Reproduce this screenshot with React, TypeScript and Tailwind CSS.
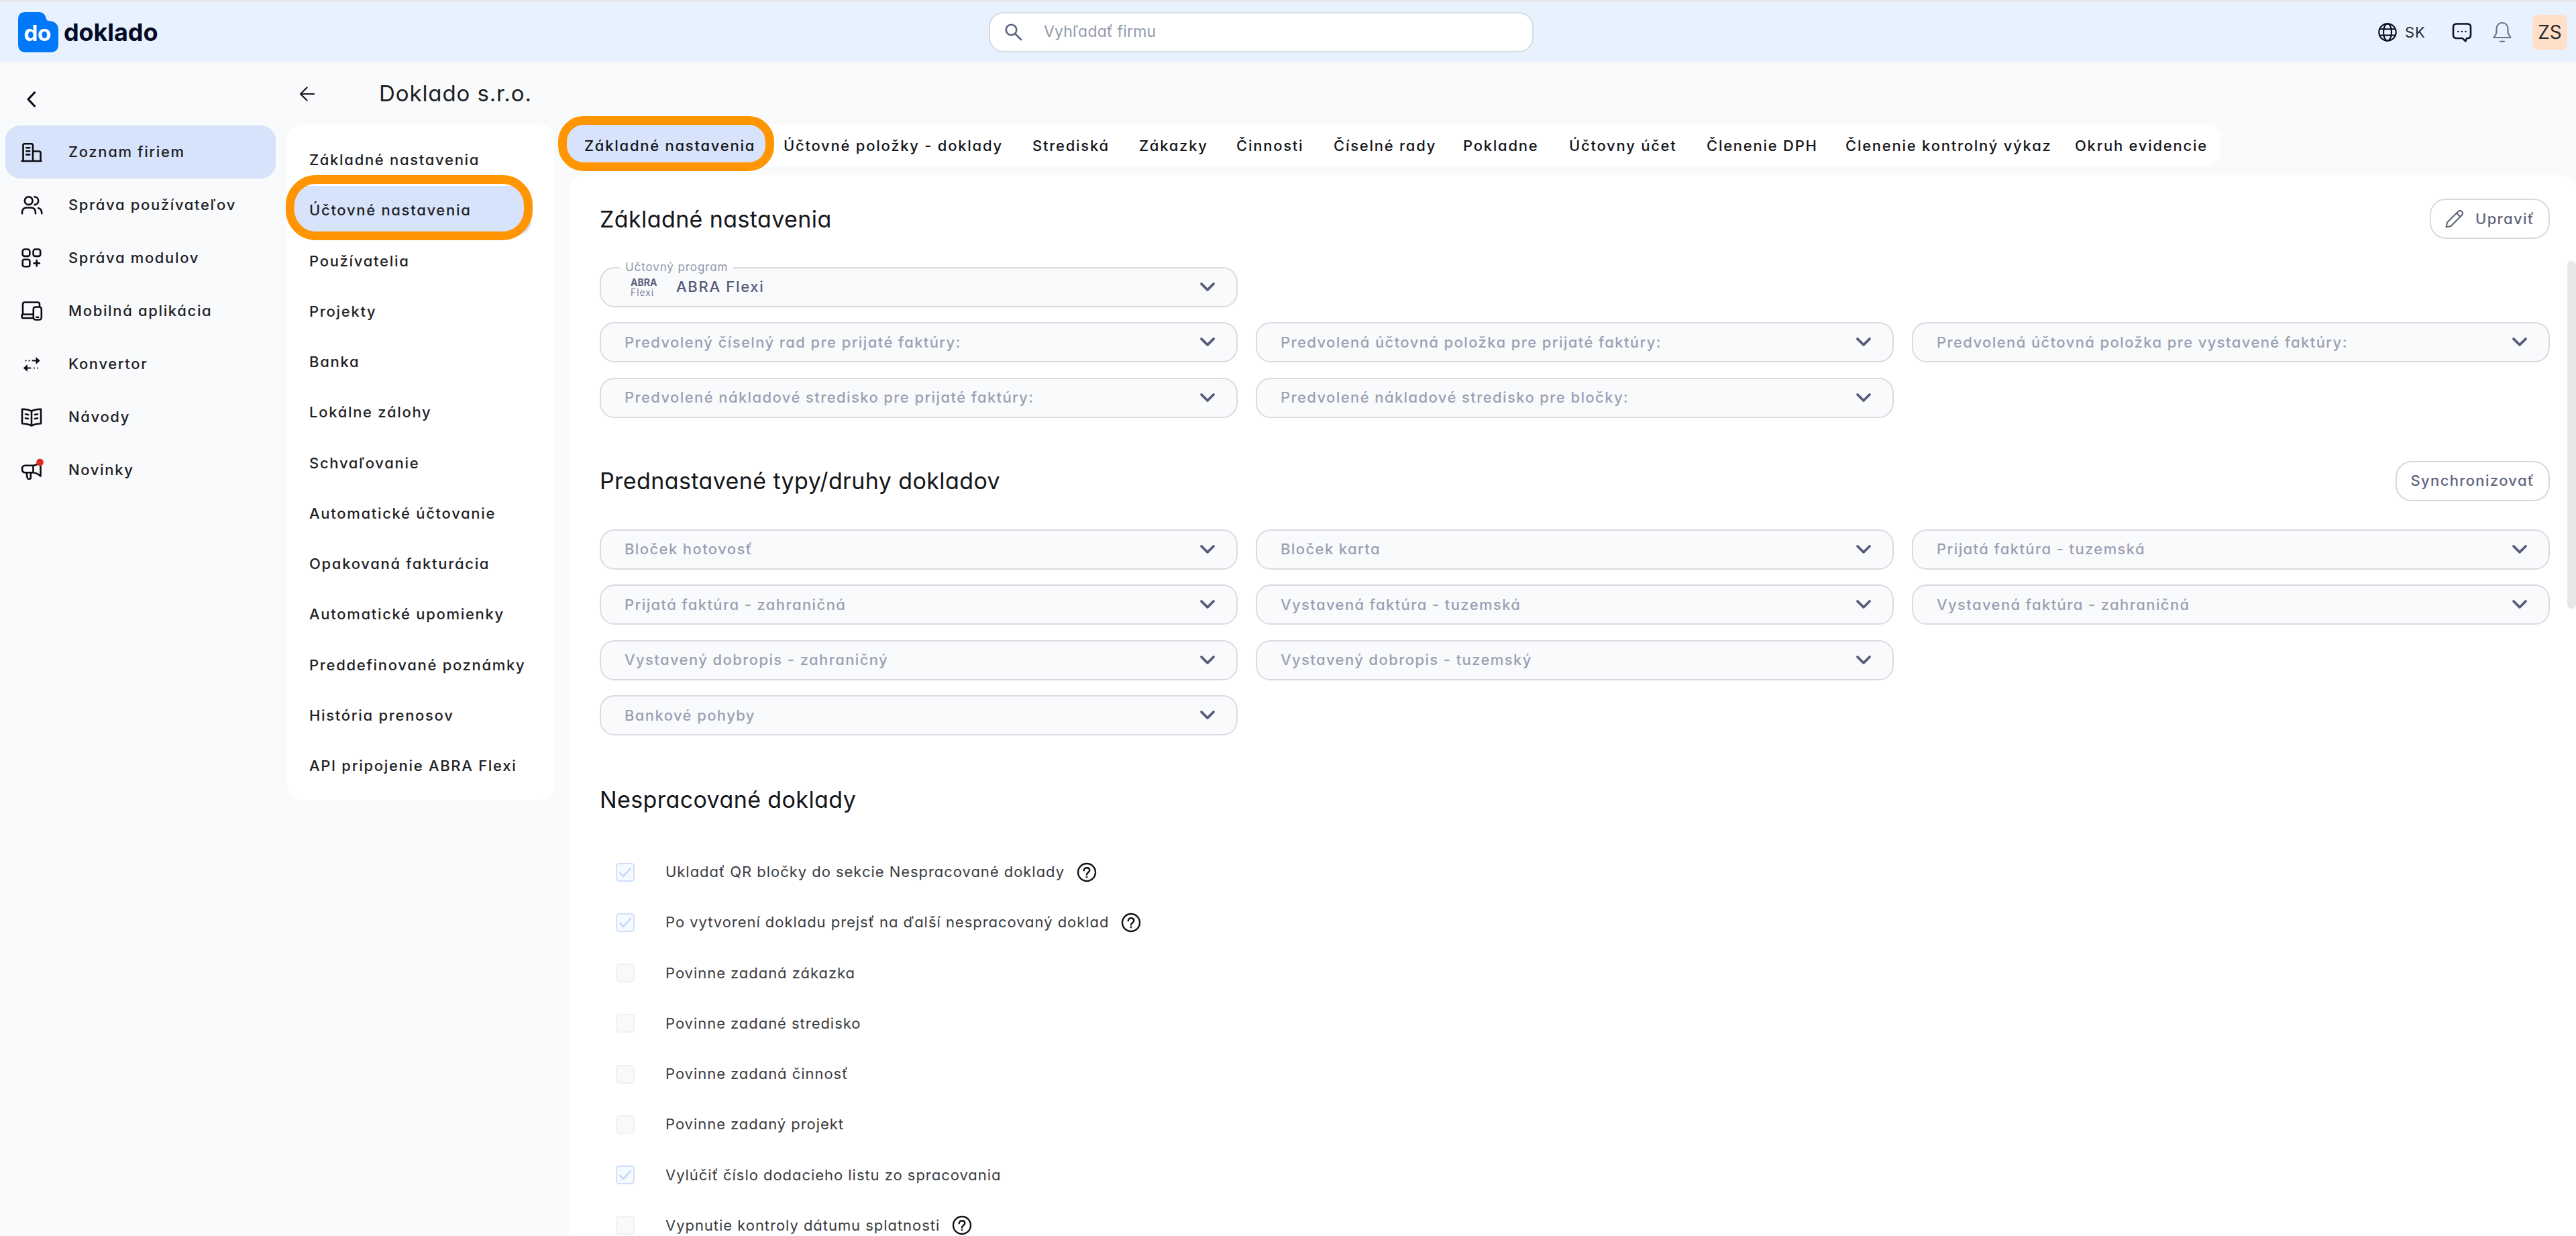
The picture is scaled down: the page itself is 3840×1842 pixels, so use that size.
import type { ReactNode } from 'react';
import clsx from 'clsx';

interface NavItem {
  label: string;
  icon: ReactNode;
}

interface CheckOption {
  label: string;
  checked?: boolean;
  help?: boolean;
}

function NavIcon({ children }: { children: ReactNode }) {
  return (
    <svg
      viewBox="0 0 32 32"
      className="size-8 shrink-0 overflow-visible"
      fill="none"
      stroke="#0b0b0f"
      strokeWidth="2.6"
      strokeLinecap="round"
      strokeLinejoin="round"
    >
      {children}
    </svg>
  );
}

const NAV: NavItem[] = [
  {
    label: 'Zoznam firiem',
    icon: (
      <NavIcon>
        <path d="M1.5 29h29M3.5 29V5.5Q3.5 3.2 5.8 3.2H15.7Q18 3.2 18 5.5V29M18 14.5H27Q29.5 14.5 29.5 17V29" />
        <path d="M8.3 9.3h4.900M8.3 14.3h4.900M8.3 19.4h4.900" />
      </NavIcon>
    ),
  },
  {
    label: 'Správa používateľov',
    icon: (
      <NavIcon>
        <circle cx="11.7" cy="9.2" r="5.9" />
        <path d="M20.5 3.3c3.5.2 5.700 2.600 5.700 5.900s-2.200 5.700-5.700 5.900" />
        <path d="M2 28.300v-1.500c0-4.500 2.500-7.300 6.500-7.300h7c4 0 6.500 2.800 6.500 7.300v1.500M26 20c3.200 1 5.200 3.500 5.200 7v1.300" />
      </NavIcon>
    ),
  },
  {
    label: 'Správa modulov',
    icon: (
      <NavIcon>
        <rect x="2.7" y="2.5" width="10.6" height="10.4" rx="3" />
        <rect x="18.6" y="2.5" width="10.6" height="10.4" rx="3" />
        <rect x="2.7" y="17.8" width="10.6" height="10.4" rx="2.5" />
        <path d="M23.7 19v8.400M19.5 23.200h8.400" />
      </NavIcon>
    ),
  },
  {
    label: 'Mobilná aplikácia',
    icon: (
      <NavIcon>
        <path d="M28 8V5.5Q28 2.5 25 2.5H6Q3 2.5 3 5.5V20.5M18 20.5H2.8Q1.6 20.5 1.6 21.8V23.4Q1.6 26 4.2 26H18" />
        <rect x="18.8" y="9.5" width="12" height="19" rx="3.2" />
        <path d="M23.5 24.800h2.600" />
      </NavIcon>
    ),
  },
  {
    label: 'Konvertor',
    icon: (
      <NavIcon>
        <path d="M7.5 10.500h.01M12.5 10.500h.01M17.5 10.500h7" strokeWidth="2.2" />
        <path d="M23 5.800l5.500 4.700-5.500 4.700z" fill="#0b0b0f" strokeWidth="0.5" />
        <path d="M25 21.500h-.01M20 21.500h-.01M14.5 21.500h-7" strokeWidth="2.2" />
        <path d="M9.500 16.800l-5.500 4.700 5.500 4.700z" fill="#0b0b0f" strokeWidth="0.5" />
      </NavIcon>
    ),
  },
  {
    label: 'Návody',
    icon: (
      <NavIcon>
        <path d="M16 6.5Q10 3.500 2 3.700V25.200Q10 25.200 16 28.500Q22 25.200 30 25.200V3.700Q22 3.500 16 6.500V28.500" />
        <path d="M7 11.200l4 .8M7 17.200l4 .8M25 11.200l-4 .8M25 17.200l-4 .8" />
      </NavIcon>
    ),
  },
  {
    label: 'Novinky',
    icon: (
      <NavIcon>
        <path d="M18.5 8.800H6.500C3.500 8.800 2 11 2 14s1.500 5.300 4.500 5.300H18.500zM18.5 8.800Q24.500 8 29.500 3.500V24.500Q24.500 20 18.500 19.300" />
        <path d="M8.5 19.500l1.300 7.700q.4 1.600 2 1.600h1q2 0 2-2V19.500" />
        <circle cx="28.5" cy="4" r="5.4" fill="#e02b20" stroke="none" />
      </NavIcon>
    ),
  },
];

const SETTINGS_MENU = [
  'Základné nastavenia',
  'Účtovné nastavenia',
  'Používatelia',
  'Projekty',
  'Banka',
  'Lokálne zálohy',
  'Schvaľovanie',
  'Automatické účtovanie',
  'Opakovaná fakturácia',
  'Automatické upomienky',
  'Preddefinované poznámky',
  'História prenosov',
  'API pripojenie ABRA Flexi',
];

const TABS = [
  { label: 'Základné nastavenia', width: 'w-[297px]' },
  { label: 'Účtovné položky - doklady', width: 'w-[371px]' },
  { label: 'Strediská', width: 'w-[159px]' },
  { label: 'Zákazky', width: 'w-[145px]' },
  { label: 'Činnosti', width: 'w-[145px]' },
  { label: 'Číselné rady', width: 'w-[193px]' },
  { label: 'Pokladne', width: 'w-[158px]' },
  { label: 'Účtovny účet', width: 'w-[205px]' },
  { label: 'Členenie DPH', width: 'w-[207px]' },
  { label: 'Členenie kontrolný výkaz', width: 'w-[342px]' },
  { label: 'Okruh evidencie', width: 'w-[215px]' },
];

const DEFAULT_FIELDS: (string | null)[] = [
  'Predvolený číselný rad pre prijaté faktúry:',
  'Predvolená účtovná položka pre prijaté faktúry:',
  'Predvolená účtovná položka pre vystavené faktúry:',
  'Predvolené nákladové stredisko pre prijaté faktúry:',
  'Predvolené nákladové stredisko pre bločky:',
];

// null keeps the grid cell empty
const DOCUMENT_TYPES: (string | null)[] = [
  'Bloček hotovosť',
  'Bloček karta',
  'Prijatá faktúra - tuzemská',
  'Prijatá faktúra - zahraničná',
  'Vystavená faktúra - tuzemská',
  'Vystavená faktúra - zahraničná',
  'Vystavený dobropis - zahraničný',
  'Vystavený dobropis - tuzemský',
  null,
  'Bankové pohyby',
];

const OPTIONS: CheckOption[] = [
  { label: 'Ukladať QR bločky do sekcie Nespracované doklady', checked: true, help: true },
  { label: 'Po vytvorení dokladu prejsť na ďalší nespracovaný doklad', checked: true, help: true },
  { label: 'Povinne zadaná zákazka' },
  { label: 'Povinne zadané stredisko' },
  { label: 'Povinne zadaná činnosť' },
  { label: 'Povinne zadaný projekt' },
  { label: 'Vylúčiť číslo dodacieho listu zo spracovania', checked: true },
  { label: 'Vypnutie kontroly dátumu splatnosti', help: true },
];

function Logo() {
  return (
    <div className="flex items-center">
      <svg viewBox="0 0 60 60" className="size-[60px]">
        <path
          d="M11 0H31Q38.5 0 41 7L42 10.500Q43 13 46 13Q60 14 60 27V48Q60 60 48 60H12Q0 60 0 48V11Q0 0 11 0Z"
          fill="#0078fa"
        />
        <text x="8.5" y="42.5" fill="#fff" fontSize="33" fontWeight="650" letterSpacing="-0.2">
          do
        </text>
      </svg>
      <span className="ml-[8px] text-[36px] leading-none font-[650] tracking-[-0.1px] text-[#050a24] [font-feature-settings:normal]">
        doklado
      </span>
    </div>
  );
}

function Header() {
  return (
    <header className="flex h-[92px] items-center border-t-[3px] border-[#e4e5ea] bg-[#e8f2fe]">
      <div className="w-[1474px] pl-[27px]">
        <Logo />
      </div>
      <div className="flex h-[60px] w-[812px] items-center rounded-[22px] border-2 border-[#d3dae4] bg-white pl-[22px]">
        <svg viewBox="0 0 26 26" className="size-[26px]" fill="none" stroke="#5d6580" strokeWidth="2.6" strokeLinecap="round">
          <circle cx="9.5" cy="9.5" r="7.8" />
          <path d="M15.5 15.500l8.500 8.500" />
        </svg>
        <span className="ml-[32px] text-[23px] tracking-[0.2px] text-[#929aad]">Vyhľadať firmu</span>
      </div>
      <div className="ml-auto flex items-center pr-[13px]">
        <svg viewBox="0 0 28 28" className="size-7" fill="none" stroke="#10131f" strokeWidth="2.2">
          <circle cx="14" cy="14" r="12.7" />
          <ellipse cx="14" cy="14" rx="6" ry="12.7" />
          <path d="M2.3 9.300h23.400M2.3 18.700h23.400" />
        </svg>
        <span className="ml-3 w-[37px] pt-[2px] text-[22px] tracking-[0.8px] text-[#26282f]">SK</span>
        <svg viewBox="0 0 30 30" className="ml-[33px] size-[30px]" fill="none" stroke="#10131f" strokeWidth="2.6" strokeLinejoin="round">
          <path d="M7 2.500H23Q28 2.500 28 7.500V19Q28 24 23.500 24H22L20.500 28.500L15.500 24H7Q2 24 2 19V7.500Q2 2.500 7 2.500Z" />
          <path d="M9.5 14h.01M15 14h.01M20.5 14h.01" strokeLinecap="round" />
        </svg>
        <svg viewBox="0 0 28 32" className="ml-[31px] h-8 w-7 overflow-visible" fill="none" stroke="#6d7384" strokeWidth="2.2" strokeLinecap="round" strokeLinejoin="round">
          <path d="M14 2C8.500 2 5.500 6 5.500 11V15.500Q5.500 17.500 4 20L1.500 24H26.500L24 20Q22.500 17.500 22.500 15.500V11C22.500 6 19.500 2 14 2Z" />
          <path d="M11 29.800h6" />
        </svg>
        <div className="ml-[31px] flex size-[52px] items-center justify-center rounded-lg bg-[#ffdfca] text-[28px] text-[#2b2a2c]">
          ZS
        </div>
      </div>
    </header>
  );
}

function Sidebar() {
  return (
    <aside className="w-[428px] shrink-0 px-2">
      <div className="flex h-[95px] items-center pt-[16px] pl-[29px]">
        <svg viewBox="0 0 20 24" className="h-6 w-5" fill="none" stroke="#0b0b0f" strokeWidth="3.2" strokeLinecap="round" strokeLinejoin="round">
          <path d="M14.5 2L5 12l9.500 10" />
        </svg>
      </div>
      <nav className="w-[403px]">
        {NAV.map((item, i) => (
          <a
            key={item.label}
            className={clsx('flex h-[79px] items-center gap-[39px] rounded-[22px] pl-[23px]', i === 0 && 'bg-[#d6e3fa]')}
          >
            {item.icon}
            <span className="text-[22px] font-[460] tracking-[1.65px] text-[#1f2125]">{item.label}</span>
          </a>
        ))}
      </nav>
    </aside>
  );
}

function SettingsMenu() {
  return (
    <nav className="h-[1008px] w-[398px] shrink-0 rounded-[22px] bg-white pt-[16px]">
      {SETTINGS_MENU.map((label, i) => (
        <a key={label} className="relative flex h-[75.25px] items-center px-3">
          <span
            className={clsx(
              'flex h-[73px] w-[352px] items-center rounded-[20px] pl-[21px] text-[22px] font-[460] tracking-[1.7px] text-[#1f2125]',
              i === 1 && 'bg-[#d6e3fa]',
            )}
          >
            {label}
          </span>
          {i === 1 && (
            <span className="absolute top-[-15px] left-[-2px] h-[97px] w-[368px] rounded-[45px] border-[13px] border-[#ff9500]" />
          )}
        </a>
      ))}
    </nav>
  );
}

function Tabs() {
  return (
    <div className="relative z-10 flex h-[63px] w-[2465px] items-center rounded-[22px] bg-white">
      <span className="absolute left-0 h-[61px] w-[300px] rounded-[22px] bg-[#d6e3fa]" />
      <div className="relative flex pt-[2px] pl-[26px] text-[22px] font-[460] tracking-[1.75px] whitespace-nowrap text-[#15161a]">
        {TABS.map((tab) => (
          <a key={tab.label} className={clsx('shrink-0', tab.width)}>
            {tab.label}
          </a>
        ))}
      </div>
      <span className="absolute top-[-12px] left-[-13px] h-[82px] w-[322px] rounded-[38px] border-[13px] border-[#ff9500]" />
    </div>
  );
}

function Chevron() {
  return (
    <svg viewBox="0 0 24 16" className="ml-auto h-4 w-6" fill="none" stroke="#565b7a" strokeWidth="3.8" strokeLinecap="round" strokeLinejoin="round">
      <path d="M3 3l9 9 9-9" />
    </svg>
  );
}

function Select({ label }: { label: string }) {
  return (
    <div className="flex h-[60px] items-center rounded-[22px] border-2 border-[#d9dbe1] bg-[#f8fafc] pr-[31px] pl-[35px]">
      <span className="text-[22px] font-medium tracking-[1.4px] whitespace-nowrap text-[#9b9fb3]">{label}</span>
      <Chevron />
    </div>
  );
}

function ProgramSelect() {
  return (
    <div className="relative flex h-[60px] items-center rounded-[22px] border-2 border-[#d9dbe1] bg-[#f8fafc] pr-[31px] pl-[44px]">
      <span className="absolute top-[-11px] left-[28px] flex h-5 items-center bg-linear-to-b from-white from-50% to-[#f8fafc] to-50% px-2 text-[17px] tracking-[0.9px] text-[#9296ac]">
        Učtovný program
      </span>
      <span className="flex w-[68px] flex-col text-[14px] leading-[15px] text-[#5c607c]">
        <b>ABRA</b>
        <span className="font-light tracking-[1px]">Flexi</span>
      </span>
      <span className="text-[22px] font-medium tracking-[1.7px] text-[#565b7a]">ABRA Flexi</span>
      <Chevron />
    </div>
  );
}

function SectionHeader({ title, children }: { title: string; children?: ReactNode }) {
  return (
    <div className="flex h-[60px] items-center justify-between">
      <h2 className="text-[34px] tracking-[0.4px] text-[#15161a]">{title}</h2>
      {children}
    </div>
  );
}

function OutlineButton({ children }: { children: ReactNode }) {
  return (
    <button className="flex h-[60px] items-center rounded-[24px] border-2 border-[#d7d9e1] px-[21px] text-[22px] font-medium tracking-[1.35px] text-[#61667f]">
      {children}
    </button>
  );
}

function FieldGrid({ fields }: { fields: (string | null)[] }) {
  return (
    <div className="grid grid-cols-3 gap-x-[27px] gap-y-[22.5px]">
      {fields.map((label, i) => (label ? <Select key={i} label={label} /> : <div key={i} />))}
    </div>
  );
}

function CheckRow({ label, checked, help }: CheckOption) {
  return (
    <label className="flex h-[75.25px] items-center pl-[24px]">
      <span
        className={clsx(
          'flex size-7 items-center justify-center rounded-[5px] border-2',
          checked ? 'border-[#cfe0fc] bg-[#f6f9fe]' : 'border-[#eff0f3] bg-[#f8f9fb]',
        )}
      >
        {checked && (
          <svg viewBox="0 0 20 16" className="h-4 w-5" fill="none" stroke="#bdd5fb" strokeWidth="2.4">
            <path d="M1.5 8l5.500 6L18.500 1.500" />
          </svg>
        )}
      </span>
      <span className="ml-[46px] text-[22px] tracking-[0.96px] text-[#3a3b40]">{label}</span>
      {help && (
        <svg viewBox="0 0 30 30" className="ml-[18px] size-[30px]" fill="none" stroke="#121316" strokeWidth="2.4" strokeLinecap="round">
          <circle cx="15" cy="15" r="13" />
          <path d="M10.8 12.300C10.800 9.700 12.500 8.300 15 8.300s4.300 1.500 4.300 3.700c0 3.200-4.300 3.200-4.300 6.300" />
          <circle cx="15" cy="21.8" r="0.5" />
        </svg>
      )}
    </label>
  );
}

function Content() {
  return (
    <section className="h-[1581px] overflow-hidden rounded-t-[22px] bg-white pt-[35px] pr-[39px] pl-[45px]">
      <SectionHeader title="Základné nastavenia">
        <OutlineButton>
          <svg viewBox="0 0 28 28" className="mr-[17px] size-7" fill="none" stroke="#61667f" strokeWidth="2.2" strokeLinejoin="round">
            <path d="M1.5 26.500L3 19.500L19.500 3Q22 .8 24.800 3.200Q27.200 6 25 8.500L8.500 25Z" />
            <path d="M17 5.500l5.500 5.500" />
          </svg>
          Upraviť
        </OutlineButton>
      </SectionHeader>
      <div className="mt-[41.5px] mb-[22.5px] grid grid-cols-3 gap-x-[27px]">
        <ProgramSelect />
      </div>
      <FieldGrid fields={DEFAULT_FIELDS} />

      <div className="mt-16 mb-[42px]">
        <SectionHeader title="Prednastavené typy/druhy dokladov">
          <OutlineButton>Synchronizovať</OutlineButton>
        </SectionHeader>
      </div>
      <FieldGrid fields={DOCUMENT_TYPES} />

      <div className="mt-[65px] mb-[41px]">
        <SectionHeader title="Nespracované doklady" />
      </div>
      {OPTIONS.map((option) => (
        <CheckRow key={option.label} {...option} />
      ))}
    </section>
  );
}

export default function App() {
  return (
    <div className="h-[1842px] w-[3840px] overflow-hidden bg-[#f8fafc] font-['Inter',sans-serif] [font-feature-settings:'cv11']">
      <Header />
      <div className="flex">
        <Sidebar />
        <main className="relative min-w-0 flex-1">
          <div className="flex h-[93px] items-center pt-[2px] pl-[18px]">
            <svg viewBox="0 0 24 24" className="size-6" fill="none" stroke="#17181c" strokeWidth="2.2" strokeLinecap="round" strokeLinejoin="round">
              <path d="M22 12H2.500M11.5 2.500L2 12l9.500 9.500" />
            </svg>
            <h1 className="ml-[95px] text-[33px] tracking-[0.9px] text-[#1c1d21]">Doklado s.r.o.</h1>
          </div>
          <div className="flex">
            <SettingsMenu />
            <div className="ml-[19px] min-w-0 flex-1">
              <Tabs />
              <div className="mt-[13px] pl-[4px]">
                <Content />
              </div>
            </div>
          </div>
          {/* scrollbar thumb */}
          <div className="absolute top-[297px] right-0 h-[518px] w-[13px] rounded-[6px] bg-[#e8e8e8]" />
        </main>
      </div>
    </div>
  );
}
